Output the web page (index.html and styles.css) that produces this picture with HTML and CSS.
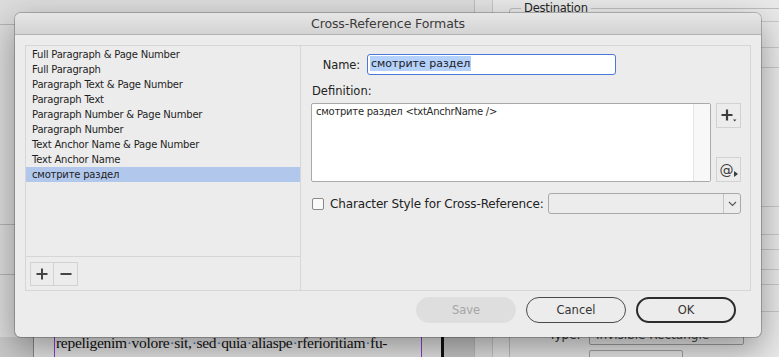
FILE: index.html
```html
<!DOCTYPE html>
<html lang="en">

<head>
    <meta charset="UTF-8">
    <title>Cross-Reference Formats</title>
    <link rel="stylesheet" href="styles.css">
</head>

<body>
    <!-- application behind the dialog -->
    <div class="app">
        <div class="workspace">
            <div class="guides">
                <div class="guide g1"></div>
                <div class="guide g2"></div>
                <div class="guide g3"></div>
            </div>
            <div class="spread">
                <div class="page">
                    <p class="page-text">repeligenim<i>·</i>volore<i>·</i>sit,<i>·</i>sed<i>·</i>quia<i>·</i>aliaspe<i>·</i>rferioritiam<i>·</i>fu-</p>
                </div>
                <div class="page-edge"></div>
            </div>
        </div>
        <div class="props">
            <div class="props-box">
                <div class="group">
                    <span class="group-title">Destination</span>
                    <div class="prop-row h13"></div>
                    <div class="prop-row h26"></div>
                    <div class="prop-row h20"></div>
                    <div class="prop-row h139"></div>
                    <div class="prop-row h28"></div>
                    <div class="prop-row h15"></div>
                    <div class="prop-row h20"></div>
                    <div class="prop-row h15"></div>
                    <div class="prop-row h27"></div>
                    <div class="type-row">
                        <span class="type-label">Type:</span>
                        <span class="type-select">Invisible Rectangle</span>
                    </div>
                    <div class="type-row2"><span class="small-box"></span></div>
                </div>
            </div>
        </div>
    </div>

    <!-- the dialog -->
    <div class="dialog">
        <div class="titlebar">Cross-Reference Formats</div>
        <div class="dialog-body">
            <div class="panel">
                <div class="formats">
                    <ul class="format-list">
                        <li>Full Paragraph &amp; Page Number</li>
                        <li>Full Paragraph</li>
                        <li>Paragraph Text &amp; Page Number</li>
                        <li>Paragraph Text</li>
                        <li>Paragraph Number &amp; Page Number</li>
                        <li>Paragraph Number</li>
                        <li>Text Anchor Name &amp; Page Number</li>
                        <li>Text Anchor Name</li>
                        <li class="selected">смотрите раздел</li>
                    </ul>
                    <div class="format-tools">
                        <span class="tool-btn">
                            <svg width="14" height="14" viewBox="0 0 14 14"><path d="M7 1.5v11M1.5 7h11" stroke="#444" stroke-width="2"/></svg>
                        </span>
                        <span class="tool-btn">
                            <svg width="14" height="14" viewBox="0 0 14 14"><path d="M1.5 7h11" stroke="#444" stroke-width="2"/></svg>
                        </span>
                    </div>
                </div>
                <div class="editor">
                    <div class="name-row">
                        <label class="name-label">Name:</label>
                        <div class="name-input"><span class="sel">смотрите раздел</span></div>
                    </div>
                    <div class="def-label">Definition:</div>
                    <div class="def-row">
                        <div class="def-area">
                            <div class="def-text">смотрите раздел &lt;txtAnchrName /&gt;</div>
                            <div class="def-scroll"></div>
                        </div>
                        <div class="def-side">
                            <span class="side-btn">
                                <svg width="20" height="20" viewBox="0 0 20 20"><path d="M8 3.5v11M2.5 9h11" stroke="#3c3c3c" stroke-width="2.2"/><path d="M14 13.5h3.4l-1.7 2z" fill="#3c3c3c"/></svg>
                            </span>
                            <span class="side-btn at-btn">@<svg width="4" height="6" viewBox="0 0 4 6"><path d="M0 0l4 3-4 3z" fill="#3c3c3c"/></svg></span>
                        </div>
                    </div>
                    <div class="char-row">
                        <span class="checkbox"></span>
                        <span class="char-label">Character Style for Cross-Reference:</span>
                        <div class="select">
                            <span class="select-value"></span>
                            <span class="select-arrow">
                                <svg width="9" height="6" viewBox="0 0 9 6"><path d="M1 1l3.5 3.5L8 1" fill="none" stroke="#555" stroke-width="1.1"/></svg>
                            </span>
                        </div>
                    </div>
                </div>
            </div>
            <div class="footer">
                <button class="btn btn-disabled">Save</button>
                <button class="btn">Cancel</button>
                <button class="btn btn-default">OK</button>
            </div>
        </div>
    </div>
</body>

</html>
```

FILE: styles.css
```css
* {
    padding: 0;
    margin: 0;
    box-sizing: border-box;
    list-style: none;
}

body {
    width: 779px;
    height: 357px;
    overflow: hidden;
    position: relative;
    background: #dedede;
    font-family: "DejaVu Sans", "Liberation Sans", sans-serif;
    color: #222;
}

/* background application */
.app {
    display: flex;
    height: 357px;
}

.workspace {
    width: 475px;
    display: flex;
    flex-direction: column;
    background: #dcdcdc;
    border-right: 1px solid #bdbdbd;
}

.guides {
    height: 337px;
    padding-top: 24px;
}

.guide {
    height: 1px;
    background: #b4b4b4;
}

.g2 {
    margin-top: 199px;
}

.g3 {
    margin-top: 49px;
}

.spread {
    flex: 1;
    display: flex;
    padding-left: 33px;
    background: #c9c9c9;
}

.page {
    width: 408px;
    background: #e7e7e7;
    border-left: 1px solid #888;
    padding-left: 20px;
}

.page-text {
    font-family: "Liberation Serif", serif;
    font-size: 15.5px;
    color: #111;
    border-left: 1px solid #8b3fd6;
    border-right: 1px solid #8b3fd6;
    width: 368px;
    height: 20px;
    padding-left: 1px;
    line-height: 12px;
    white-space: nowrap;
    letter-spacing: -0.3px;
}

.page-text i {
    font-style: normal;
    color: #3b7bd6;
}

.page-edge {
    width: 3px;
    background: #111;
}

.props {
    flex: 1;
    background: #e2e2e2;
    padding-left: 17px;
}

.props-box {
    height: 357px;
    border-left: 1px solid #c6c6c6;
    background: #e9e9e9;
    padding: 8px 0 0 16px;
}

.group {
    border-top: 1px solid #bdbdbd;
    border-left: 1px solid #bdbdbd;
    border-radius: 4px 0 0 0;
    position: relative;
    padding-left: 1px;
}

.group-title {
    position: absolute;
    left: 11px;
    top: -8px;
    font-size: 11.5px;
    letter-spacing: -0.2px;
    color: #262626;
    background: #e9e9e9;
    padding: 0 3px;
    line-height: 14px;
}

.prop-row {
    border-bottom: 1px solid #c8c8c8;
}

.h13 { height: 13px; }
.h26 { height: 26px; }
.h20 { height: 20px; }
.h139 { height: 139px; }
.h28 { height: 28px; }
.h15 { height: 15px; }
.h27 { height: 27px; }

.type-row {
    display: flex;
    align-items: center;
    height: 22px;
    margin-top: 12px;
    padding-left: 38px;
}

.type-label {
    font-size: 12px;
    color: #333;
    width: 40px;
}

.type-select {
    width: 155px;
    height: 20px;
    border: 1px solid #9d9d9d;
    border-radius: 2px;
    font-size: 12px;
    color: #444;
    padding-left: 6px;
    line-height: 18px;
}

.type-row2 {
    padding: 4px 0 0 78px;
}

.small-box {
    display: block;
    width: 94px;
    height: 20px;
    border: 1px solid #a4a4a4;
    border-radius: 2px;
}

/* dialog */
.dialog {
    position: absolute;
    left: 15px;
    top: 13px;
    width: 746px;
    height: 324px;
    background: #ececec;
    border-radius: 6px;
    box-shadow: 0 0 0 1px rgba(0, 0, 0, 0.22), 0 12px 34px rgba(0, 0, 0, 0.38);
    overflow: hidden;
}

.titlebar {
    height: 22px;
    background: linear-gradient(#e6e6e6, #d3d3d3);
    border-bottom: 1px solid #b3b3b3;
    text-align: center;
    font-size: 12.5px;
    letter-spacing: -0.1px;
    line-height: 21px;
    color: #3a3a3a;
}

.dialog-body {
    padding: 10px 10px 0;
}

.panel {
    display: flex;
    height: 246px;
    border: 1px solid #d6d6d6;
}

.formats {
    width: 275px;
    border-right: 1px solid #d6d6d6;
    display: flex;
    flex-direction: column;
}

.format-list {
    flex: 1;
    padding-top: 1px;
}

.format-list li {
    height: 15px;
    line-height: 15px;
    font-size: 10px;
    letter-spacing: -0.2px;
    padding-left: 6px;
    color: #1e1e1e;
}

.format-list li.selected {
    background: #b1c7eb;
}

.format-tools {
    border-top: 1px solid #d6d6d6;
    padding: 5px 4px 4px;
    display: flex;
}

.tool-btn {
    width: 24px;
    height: 24px;
    border: 1px solid #d2d2d2;
    display: flex;
    align-items: center;
    justify-content: center;
}

.tool-btn + .tool-btn {
    border-left: none;
}

.editor {
    flex: 1;
    padding: 8px 9px 0 10px;
}

.name-row {
    display: flex;
    align-items: center;
}

.name-label {
    width: 49px;
    text-align: right;
    font-size: 11.5px;
    letter-spacing: -0.1px;
    color: #222;
    margin-right: 7px;
}

.name-input {
    width: 249px;
    height: 21px;
    background: #fff;
    border: 1.5px solid #4a78da;
    border-radius: 3px;
    padding-left: 2px;
    font-size: 11px;
    line-height: 17px;
}

.sel {
    background: #b4d1fb;
    padding: 1px 1px;
}

.def-label {
    font-size: 11.5px;
    margin-top: 9px;
    padding-left: 1px;
    line-height: 14px;
}

.def-row {
    display: flex;
    margin-top: 5px;
}

.def-area {
    width: 400px;
    height: 79px;
    background: #fff;
    border: 1px solid #a9a9a9;
    border-radius: 2px;
    display: flex;
}

.def-text {
    flex: 1;
    font-size: 10px;
    letter-spacing: -0.25px;
    padding: 2px 0 0 4px;
    color: #2a2a2a;
}

.def-scroll {
    width: 17px;
    background: #f8f8f8;
    border-left: 1px solid #e4e4e4;
}

.def-side {
    display: flex;
    flex-direction: column;
    justify-content: space-between;
    margin-left: 5px;
}

.side-btn {
    width: 25px;
    height: 25px;
    border: 1px solid #d2d2d2;
    display: flex;
    align-items: center;
    justify-content: center;
}

.at-btn {
    font-size: 14px;
    color: #3c3c3c;
}

.at-btn svg {
    margin-top: 8px;
}

.char-row {
    display: flex;
    align-items: center;
    margin-top: 11px;
}

.checkbox {
    width: 12px;
    height: 12px;
    border: 1px solid #8a8a8a;
    border-radius: 2px;
    background: #fafafa;
    margin: 0 6px 0 1px;
}

.char-label {
    font-size: 12px;
    letter-spacing: -0.15px;
    white-space: nowrap;
    color: #222;
    width: 218px;
}

.select {
    width: 193px;
    height: 21px;
    border: 1px solid #a9a9a9;
    border-radius: 3px;
    display: flex;
}

.select-value {
    flex: 1;
}

.select-arrow {
    width: 17px;
    border-left: 1px solid #c4c4c4;
    display: flex;
    align-items: center;
    justify-content: center;
}

.footer {
    display: flex;
    justify-content: flex-end;
    gap: 10px;
    padding: 6px 15px 0 0;
}

.btn {
    width: 100px;
    height: 26px;
    border-radius: 13px;
    border: 1px solid #4a4a4a;
    background: #ececec;
    font-family: "DejaVu Sans", "Liberation Sans", sans-serif;
    font-size: 11.5px;
    color: #333;
}

.btn-disabled {
    border-color: #dedede;
    background: #dedede;
    color: #a6a6a6;
}

.btn-default {
    border: 2px solid #2c2c2c;
}
```
